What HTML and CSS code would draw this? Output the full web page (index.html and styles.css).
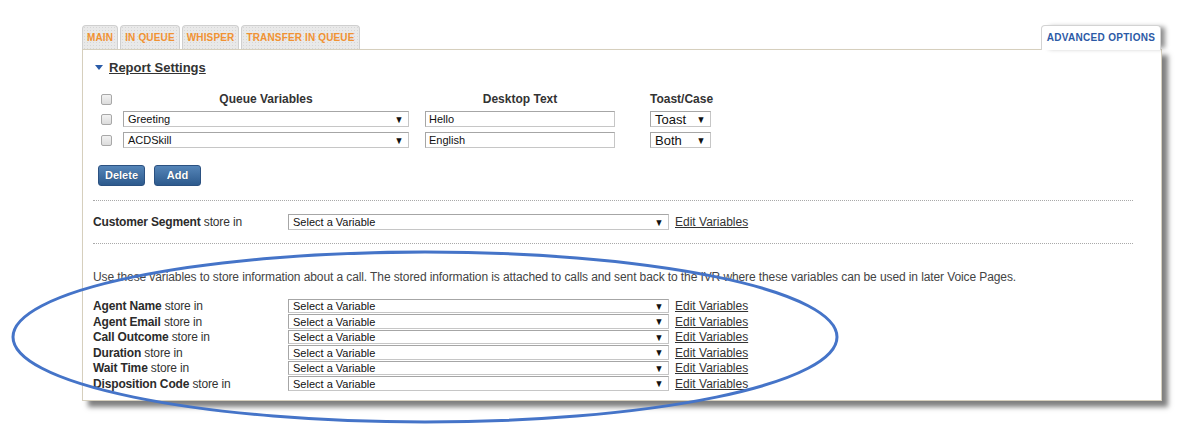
FILE: index.html
```html
<!DOCTYPE html>
<html>
<head>
<meta charset="utf-8">
<link rel="stylesheet" href="styles.css">
</head>
<body>
<div class="page">
  <div class="tabs">
    <div class="tabgroup">
      <div class="tab">MAIN</div>
      <div class="tab">IN QUEUE</div>
      <div class="tab">WHISPER</div>
      <div class="tab">TRANSFER IN QUEUE</div>
    </div>
    <div class="tab-active">ADVANCED OPTIONS</div>
  </div>
  <div class="panel">
    <div class="heading"><span class="tri"></span><span class="heading-text">Report Settings</span></div>

    <div class="qrow qhead">
      <div class="c-chk"><span class="chk"></span></div>
      <div class="c-var">Queue Variables</div>
      <div class="c-txt">Desktop Text</div>
      <div class="c-toast">Toast/Case</div>
    </div>
    <div class="qrow">
      <div class="c-chk"><span class="chk"></span></div>
      <div class="c-var"><div class="sel"><span>Greeting</span><span class="arr">▼</span></div></div>
      <div class="c-txt"><div class="inp">Hello</div></div>
      <div class="c-toast"><div class="sel big"><span>Toast</span><span class="arr">▼</span></div></div>
    </div>
    <div class="qrow">
      <div class="c-chk"><span class="chk"></span></div>
      <div class="c-var"><div class="sel"><span>ACDSkill</span><span class="arr">▼</span></div></div>
      <div class="c-txt"><div class="inp">English</div></div>
      <div class="c-toast"><div class="sel big"><span>Both</span><span class="arr">▼</span></div></div>
    </div>

    <div class="buttons">
      <div class="btn">Delete</div>
      <div class="btn">Add</div>
    </div>

    <div class="dots d1"></div>
    <div class="srow seg">
      <div class="lbl"><b>Customer Segment</b> store in</div>
      <div class="sel wide"><span>Select a Variable</span><span class="arr">▼</span></div>
      <a class="edit">Edit Variables</a>
    </div>
    <div class="dots d2"></div>

    <p class="info">Use these variables to store information about a call. The stored information is attached to calls and sent back to the IVR where these variables can be used in later Voice Pages.</p>

    <div class="rows">
      <div class="srow small">
        <div class="lbl"><b>Agent Name</b> store in</div>
        <div class="sel wide sm"><span>Select a Variable</span><span class="arr">▼</span></div>
        <a class="edit">Edit Variables</a>
      </div>
      <div class="srow small">
        <div class="lbl"><b>Agent Email</b> store in</div>
        <div class="sel wide sm"><span>Select a Variable</span><span class="arr">▼</span></div>
        <a class="edit">Edit Variables</a>
      </div>
      <div class="srow small">
        <div class="lbl"><b>Call Outcome</b> store in</div>
        <div class="sel wide sm"><span>Select a Variable</span><span class="arr">▼</span></div>
        <a class="edit">Edit Variables</a>
      </div>
      <div class="srow small">
        <div class="lbl"><b>Duration</b> store in</div>
        <div class="sel wide sm"><span>Select a Variable</span><span class="arr">▼</span></div>
        <a class="edit">Edit Variables</a>
      </div>
      <div class="srow small">
        <div class="lbl"><b>Wait Time</b> store in</div>
        <div class="sel wide sm"><span>Select a Variable</span><span class="arr">▼</span></div>
        <a class="edit">Edit Variables</a>
      </div>
      <div class="srow small">
        <div class="lbl"><b>Disposition Code</b> store in</div>
        <div class="sel wide sm"><span>Select a Variable</span><span class="arr">▼</span></div>
        <a class="edit">Edit Variables</a>
      </div>
    </div>
  </div>
</div>
<svg class="annot" width="1200" height="434" viewBox="0 0 1200 434">
  <ellipse cx="425" cy="337" rx="412" ry="85" fill="none" stroke="#4574c8" stroke-width="3"/>
</svg>
</body>
</html>
```

FILE: styles.css
```css
* { box-sizing: border-box; }
html, body { margin: 0; padding: 0; background: #fff; }
body {
  width: 1200px;
  height: 434px;
  overflow: hidden;
  position: relative;
  font-family: "Liberation Sans", Arial, sans-serif;
  color: #333;
}
.page {
  padding: 25px 0 0 82px;
  width: 1172px;
}
.tabs {
  display: flex;
  justify-content: space-between;
  align-items: flex-end;
  width: 1080px;
  height: 24px;
  position: relative;
  z-index: 2;
}
.tabgroup { display: flex; gap: 2px; height: 24px; }
.tab {
  height: 24px;
  padding: 0 4px;
  border: 1px solid #cfcfcf;
  border-bottom: none;
  border-radius: 4px 4px 0 0;
  background-color: #e9e9e9;
  background-image: radial-gradient(#d6d6d6 0.6px, transparent 0.8px);
  background-size: 3px 3px;
  color: #f19232;
  font-size: 10px;
  font-weight: bold;
  line-height: 24px;
  letter-spacing: 0.15px;
}
.tab-active {
  height: 25px;
  width: 120px;
  margin-right: 1px;
  margin-bottom: -1px;
  border: 1px solid #d3d3d3;
  border-bottom: none;
  border-radius: 4px 4px 0 0;
  background: #fff;
  color: #2c5aa6;
  font-size: 10px;
  font-weight: bold;
  line-height: 24px;
  text-align: center;
  letter-spacing: 0.3px;
  box-shadow: 6px 0 5px -2px rgba(0,0,0,0.45);
}
.panel {
  width: 1080px;
  height: 352px;
  border: 1px solid #d6cfbd;
  background: #fff;
  padding: 9px 0 0 10px;
  box-shadow: 6px 6px 5px rgba(0,0,0,0.5);
  position: relative;
  z-index: 1;
}
.heading {
  display: flex;
  align-items: center;
  height: 16px;
  font-size: 13px;
  font-weight: bold;
  color: #333;
}
.tri {
  width: 0; height: 0;
  border-left: 4.5px solid transparent;
  border-right: 4.5px solid transparent;
  border-top: 5px solid #2a5ba8;
  margin: 1px 6px 0 2px;
}
.heading-text { text-decoration: underline; }

.qrow { display: flex; align-items: center; height: 16px; margin-top: 5px; }
.qhead { height: 14px; margin-top: 17px; font-size: 12px; font-weight: bold; color: #333; text-align: center; }
.c-chk { width: 30px; padding-left: 8px; display: flex; align-items: center; }
.c-var { width: 286px; }
.c-txt { width: 190px; margin-left: 16px; }
.c-toast { width: 61px; margin-left: 35px; }
.chk {
  display: inline-block;
  width: 11px; height: 11px;
  border: 1px solid #a8a8a8;
  border-radius: 2px;
  background: linear-gradient(#f2f2f2, #dcdcdc);
}
.sel {
  display: flex;
  justify-content: space-between;
  align-items: center;
  height: 16px;
  border: 1px solid #a6a6a6;
  border-right-color: #c6c6c6;
  border-bottom-color: #c6c6c6;
  background: #fff;
  font-size: 11px;
  color: #111;
  padding: 0 4px 0 4px;
}
.sel .arr { font-size: 10px; color: #111; transform: scaleX(0.9); }
.sel.big { font-size: 13px; padding-left: 4px; padding-right: 4px; }
.inp {
  height: 16px;
  border: 1px solid #a6a6a6;
  border-right-color: #c6c6c6;
  border-bottom-color: #c6c6c6;
  font-size: 11px;
  line-height: 14px;
  padding-left: 3px;
  color: #111;
}

.buttons { display: flex; gap: 9px; margin: 17px 0 0 5px; }
.btn {
  width: 47px;
  height: 21px;
  border-radius: 3px;
  border: 1px solid #2b5181;
  background: linear-gradient(#5585b8, #2d5a8d);
  color: #fff;
  font-size: 11px;
  font-weight: bold;
  line-height: 19px;
  text-align: center;
  text-shadow: 0 0 1px rgba(0,0,0,0.4);
}

.dots { width: 1040px; border-top: 1px dotted #a9a9a9; }
.d1 { margin-top: 14px; }
.d2 { margin-top: 13px; }

.srow { display: flex; align-items: center; height: 16px; }
.seg { margin-top: 13px; }
.lbl { width: 195px; font-size: 12px; color: #333; letter-spacing: -0.15px; }
.lbl b { color: #2b2b2b; }
.sel.wide { width: 381px; }
.edit { margin-left: 6px; font-size: 12px; color: #333; text-decoration: underline; }

.info { margin: 26px 0 0 0; font-size: 12px; line-height: 14px; color: #444; letter-spacing: -0.1px; }

.rows { margin-top: 15px; display: flex; flex-direction: column; gap: 1.5px; }
.srow.small { height: 14px; }
.sel.sm { height: 14.5px; }

.annot { position: absolute; left: 0; top: 0; z-index: 5; pointer-events: none; }
```
